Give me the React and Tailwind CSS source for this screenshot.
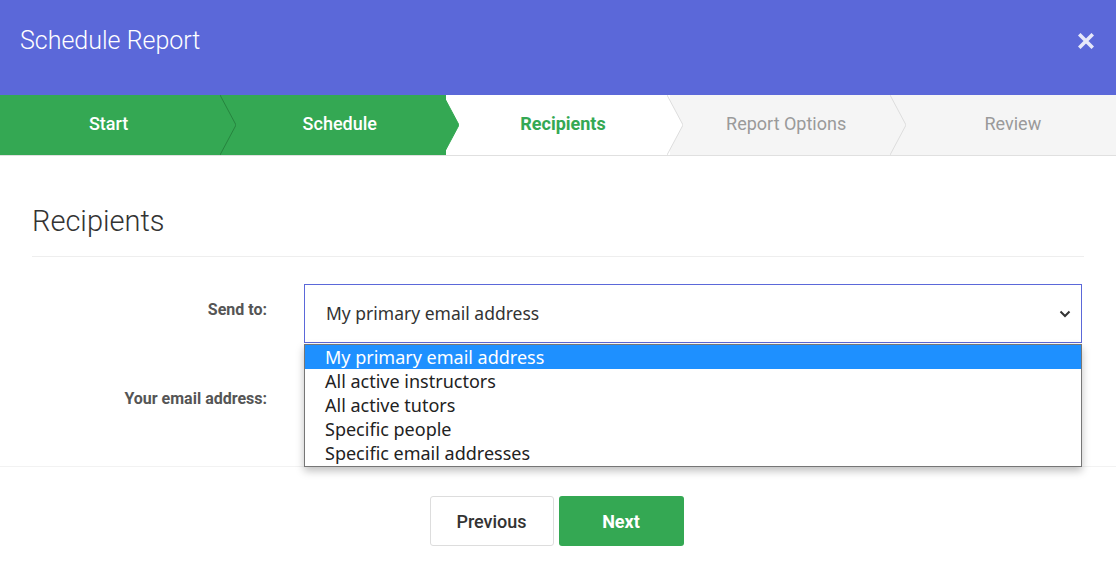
import React from 'react';

const steps = [
  { label: 'Start', state: 'done' },
  { label: 'Schedule', state: 'done' },
  { label: 'Recipients', state: 'active' },
  { label: 'Report Options', state: 'todo' },
  { label: 'Review', state: 'todo' },
];

const options = [
  'My primary email address',
  'All active instructors',
  'All active tutors',
  'Specific people',
  'Specific email addresses',
];

function Step({ step, index, last }) {
  const bg =
    step.state === 'done' ? 'bg-[#34a853] text-white font-medium' :
    step.state === 'active' ? 'bg-white text-[#34a853] font-bold' :
    'bg-[#f5f5f5] text-[#9a9a9a]';
  const fill = step.state === 'done' ? '#34a853' : step.state === 'active' ? '#ffffff' : '#f5f5f5';
  const line = step.state === 'done' && index === 0 ? '#27843f' : step.state === 'done' ? '#34a853' : '#dddddd';

  return (
    <div className={`relative w-1/5 flex items-center justify-center pb-[4px] text-[18px] ${index > 0 ? 'pl-[10px]' : 'pr-[6px]'} ${index === 4 ? 'pl-[17px]' : ''} ${bg}`}>
      <span>{step.label}</span>
      {!last && (
        <svg className="absolute top-0 -right-[13px] w-4 h-full z-10" viewBox="0 0 16 60" preserveAspectRatio="none">
          <polygon points="0,0 16,30 0,60" fill={fill} />
          <polyline points="0,0 16,30 0,60" fill="none" stroke={line} strokeWidth="1" />
        </svg>
      )}
    </div>
  );
}

export default function App() {
  return (
    <div className="w-[1116px] h-[566px] bg-white overflow-hidden font-['Roboto',sans-serif] text-[#333]">
      {/* Header */}
      <div className="h-[95px] bg-[#5b68d9] flex items-center justify-between pl-5 pr-[22px] pb-[14px]">
        <h1 className="text-[25px] font-light text-white">Schedule Report</h1>
        <svg width="16" height="16" viewBox="0 0 16 16" className="mt-[1px]">
          <path d="M2.5 2.5 L13.5 13.5 M13.5 2.5 L2.5 13.5" stroke="#e6e8fa" strokeWidth="3.6" strokeLinecap="square" />
        </svg>
      </div>

      {/* Steps */}
      <div className="h-[61px] flex border-b border-[#e0e0e0]">
        {steps.map((s, i) => (
          <Step key={s.label} step={s} index={i} last={i === steps.length - 1} />
        ))}
      </div>

      {/* Body */}
      <div className="h-[310px] overflow-hidden pl-8 pr-8 pt-[48px]">
        <h2 className="text-[29px] leading-[34px] font-light text-[#333]">Recipients</h2>
        <div className="mt-[18px] border-t border-[#eeeeee]" />

        <div className="mt-[27px] flex items-start">
          <label className="w-[235px] text-right text-[16px] leading-5 font-bold text-[#555] pt-[16px]">Send to:</label>
          <div className="relative ml-[37px] flex-1 mr-[2px]">
            <div className="h-[59px] border border-[#5b68d9] flex items-center justify-between pl-[21px] pr-[10px] font-['Noto_Sans',sans-serif] text-[17.5px] text-[#333]">
              <span>My primary email address</span>
              <svg width="12" height="8" viewBox="0 0 12 8">
                <path d="M1.5 1.5 L6 6 L10.5 1.5" stroke="#333" strokeWidth="2" fill="none" />
              </svg>
            </div>
          </div>
        </div>

        <div className="mt-[30px] flex items-start">
          <label className="w-[235px] text-right text-[16px] leading-5 font-bold text-[#555] pt-[16px]">Your email address:</label>
          <div className="ml-[37px] flex-1 h-[59px]" />
        </div>
      </div>

      {/* Footer */}
      <div className="relative h-[100px] border-t border-[#f2f2f2] flex justify-center gap-[5px] pt-[29px] pr-[3px]">
        <button className="w-[124px] h-[50px] border border-[#dddddd] rounded-[3px] bg-white text-[18px] font-medium text-[#333]">
          Previous
        </button>
        <button className="w-[125px] h-[50px] rounded-[3px] bg-[#34a853] text-[18px] font-bold text-white">
          Next
        </button>

        {/* Open select listbox */}
        <div className="absolute left-[304px] w-[778px] top-[-123px] h-[123px] bg-white border border-[#767676] shadow-[0_4px_8px_rgba(0,0,0,0.25)] z-20 font-['Noto_Sans',sans-serif] text-[18px] text-[#222]">
          {options.map((o, i) => (
            <div key={o} className={`h-6 leading-6 pl-[20px] ${i === 0 ? 'bg-[#1e90ff] text-white' : ''}`}>{o}</div>
          ))}
        </div>
      </div>
    </div>
  );
}
